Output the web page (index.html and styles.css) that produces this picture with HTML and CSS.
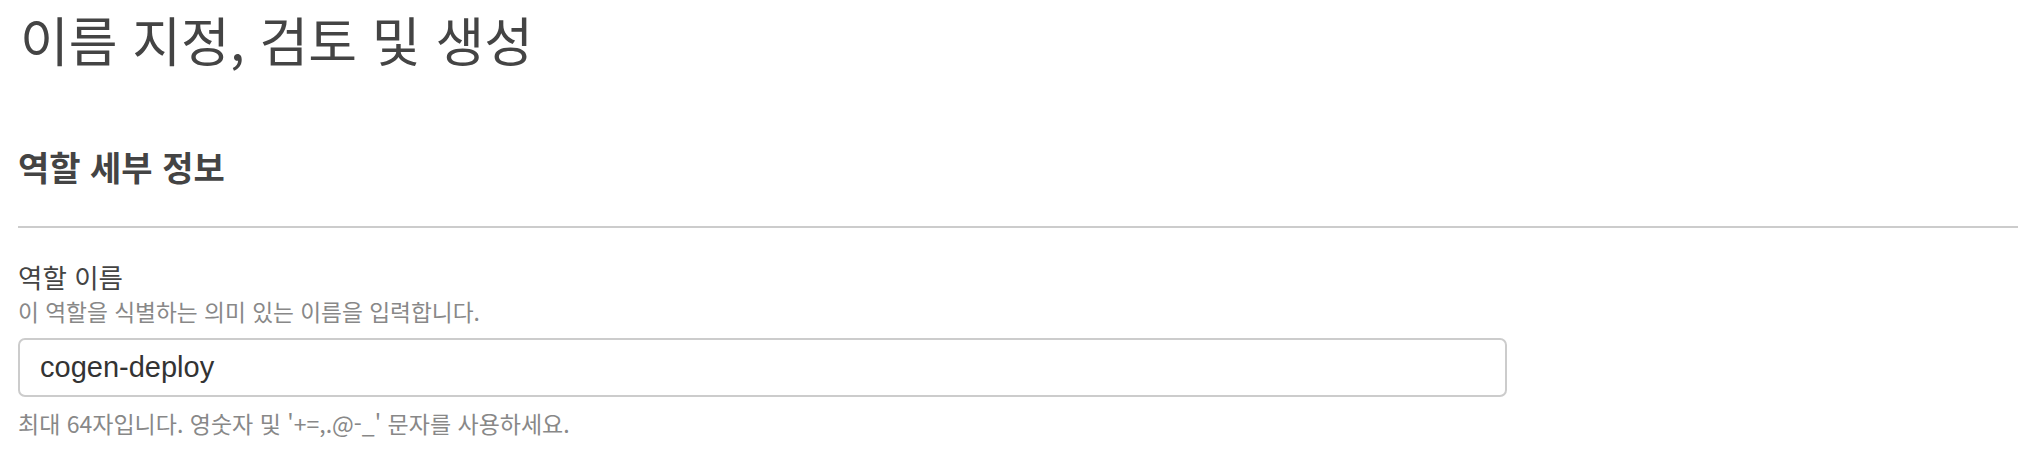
FILE: index.html
```html
<!DOCTYPE html>
<html lang="ko">
<head>
<meta charset="utf-8">
<title>이름 지정, 검토 및 생성</title>
<link rel="stylesheet" href="styles.css">
</head>
<body>
<main class="page">
  <h1 class="page-title">이름 지정, 검토 및 생성</h1>
  <section class="panel">
    <h2 class="panel-title">역할 세부 정보</h2>
    <div class="field">
      <label class="field-label" for="role-name">역할 이름</label>
      <p class="field-desc">이 역할을 식별하는 의미 있는 이름을 입력합니다.</p>
      <input class="field-input" id="role-name" type="text" value="cogen-deploy">
      <p class="field-hint">최대 64자입니다. 영숫자 및 '+=,.@-_' 문자를 사용하세요.</p>
    </div>
  </section>
</main>
</body>
</html>
```

FILE: styles.css
```css
html, body {
  margin: 0;
  padding: 0;
  background: #ffffff;
}

body {
  font-family: "Noto Sans CJK KR", "Liberation Sans", sans-serif;
  color: #444444;
}

.page {
  padding: 0 22px 0 18px;
}

.page-title {
  margin: 0;
  padding-left: 2px;
  font-size: 53px;
  font-weight: 400;
  line-height: 78px;
  color: #444444;
}

.panel {
  margin-top: 70px;
}

.panel-title {
  margin: 0;
  font-size: 34px;
  font-weight: 700;
  line-height: 38px;
  color: #444444;
  padding-bottom: 40px;
  border-bottom: 2px solid #cccccc;
}

.field {
  display: flex;
  flex-direction: column;
  align-items: flex-start;
  padding-top: 33px;
}

.field-label {
  font-size: 26.5px;
  line-height: 32px;
  color: #444444;
}

.field-desc {
  margin: 5px 0 0;
  font-size: 22.7px;
  line-height: 28px;
  color: #888888;
}

.field-input {
  box-sizing: border-box;
  margin-top: 12px;
  width: 1489px;
  height: 59px;
  padding: 0 20px;
  border: 2px solid #cccccc;
  border-radius: 7px;
  font-family: "Liberation Sans", "Noto Sans CJK KR", sans-serif;
  font-size: 29px;
  color: #333333;
  background: #ffffff;
  outline: none;
}

.field-hint {
  margin: 12px 0 0;
  font-size: 23px;
  line-height: 28px;
  color: #888888;
}
```
